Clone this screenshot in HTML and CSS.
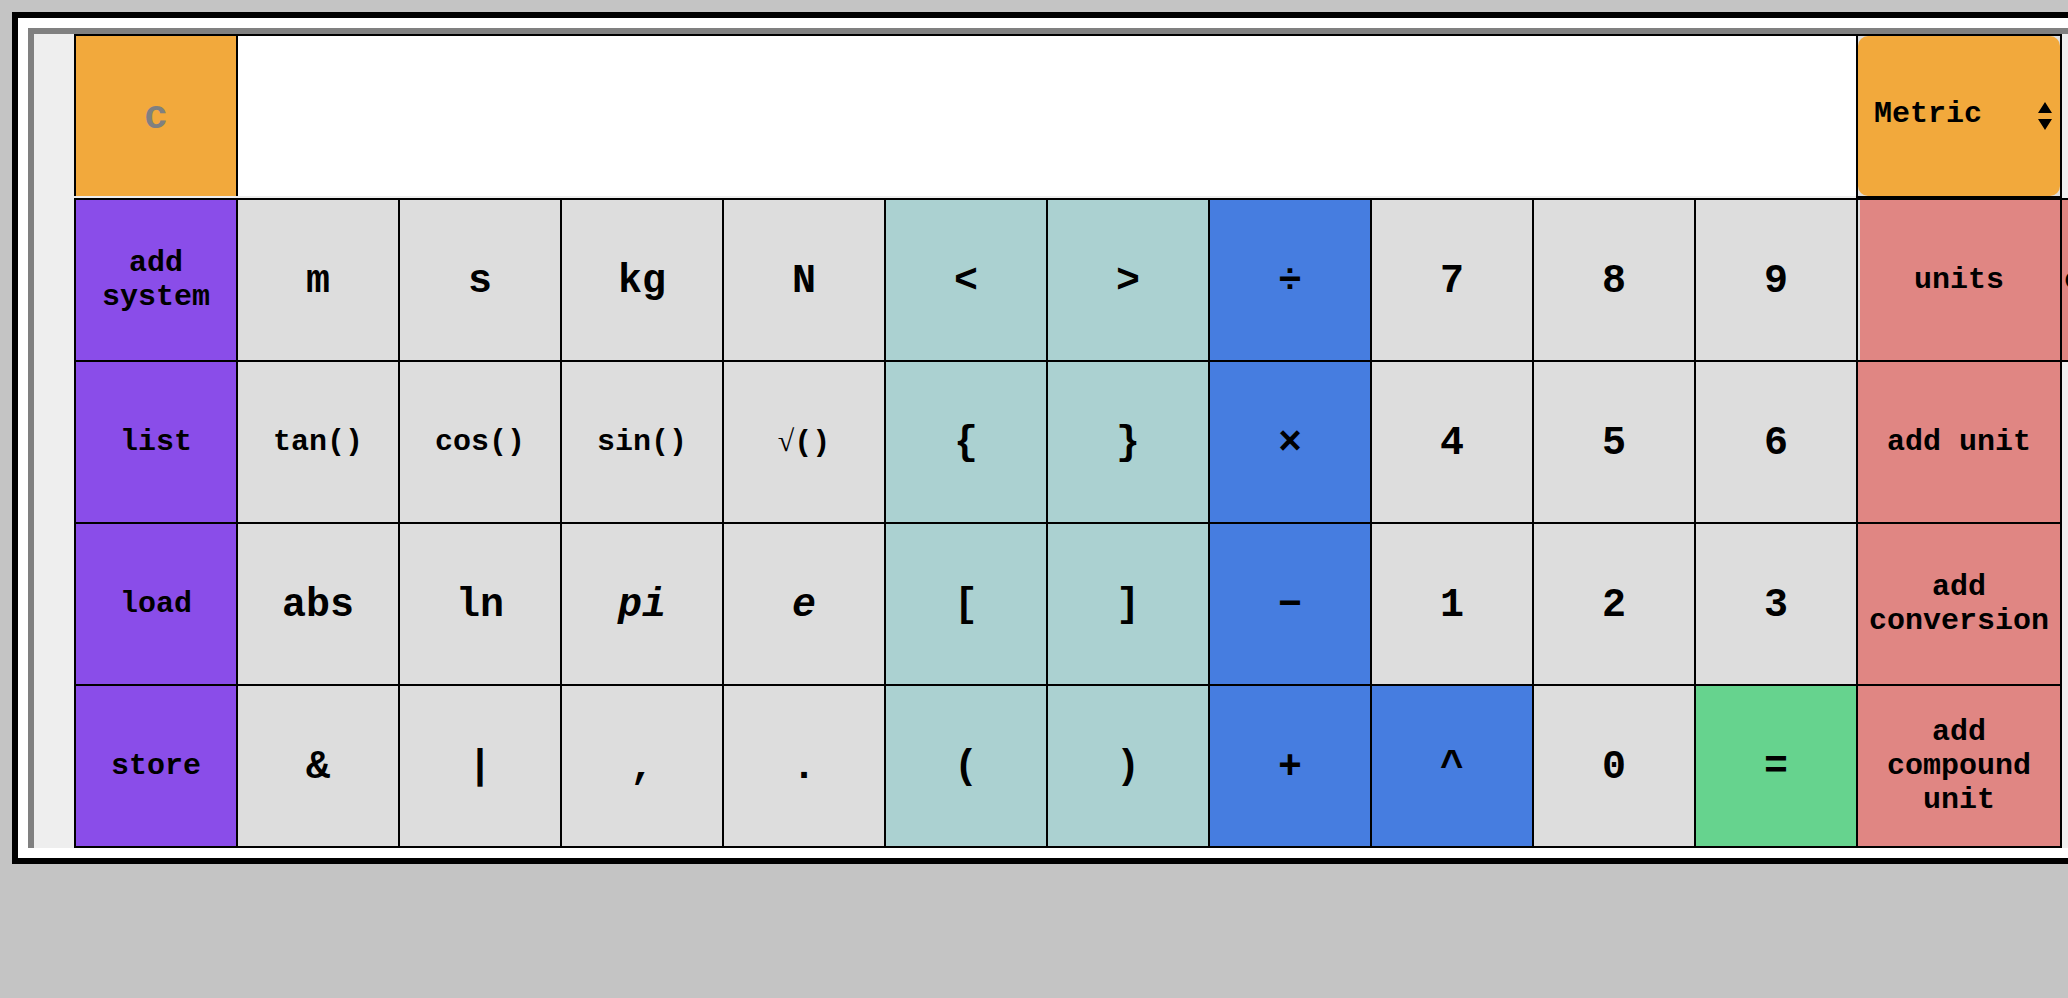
FILE: index.html
```html
<!DOCTYPE html>
<html lang="en">
<head>
<meta charset="utf-8">
<title>Unit calculator</title>
<link rel="stylesheet" href="styles.css">
</head>
<body>
<main class="frame">
  <div class="panel">
    <div class="row top">
      <button class="key orange clear" disabled>c</button>
      <input class="display" type="text" aria-label="Expression">
      <div class="system">
        <select class="system-select" aria-label="Unit system"><option>Metric</option></select>
        <svg class="arrows" viewBox="0 0 14 28" aria-hidden="true"><path d="M7 0L14 11H0ZM7 28L14 17H0Z"/></svg>
      </div>
    </div>
    <div class="row keypad">
      <button class="key small purple">add system</button>
      <button class="key">m</button>
      <button class="key">s</button>
      <button class="key">kg</button>
      <button class="key">N</button>
      <button class="key teal">&lt;</button>
      <button class="key teal">&gt;</button>
      <button class="key blue">÷</button>
      <button class="key">7</button>
      <button class="key">8</button>
      <button class="key">9</button>
      <button class="key small pink edge">units</button>
      <button class="key small pink">conversions</button>

      <button class="key small purple">list</button>
      <button class="key small">tan()</button>
      <button class="key small">cos()</button>
      <button class="key small">sin()</button>
      <button class="key small"><span><span class="root">√</span>()</span></button>
      <button class="key teal">{</button>
      <button class="key teal">}</button>
      <button class="key blue">×</button>
      <button class="key">4</button>
      <button class="key">5</button>
      <button class="key">6</button>
      <button class="key small pink">add unit</button>

      <button class="key small purple">load</button>
      <button class="key">abs</button>
      <button class="key">ln</button>
      <button class="key italic">pi</button>
      <button class="key italic">e</button>
      <button class="key teal">[</button>
      <button class="key teal">]</button>
      <button class="key blue">−</button>
      <button class="key">1</button>
      <button class="key">2</button>
      <button class="key">3</button>
      <button class="key small pink">add conversion</button>

      <button class="key small purple">store</button>
      <button class="key">&amp;</button>
      <button class="key">|</button>
      <button class="key">,</button>
      <button class="key">.</button>
      <button class="key teal">(</button>
      <button class="key teal">)</button>
      <button class="key blue">+</button>
      <button class="key blue">^</button>
      <button class="key">0</button>
      <button class="key green">=</button>
      <button class="key small pink">add compound unit</button>
    </div>
  </div>
</main>
</body>
</html>
```

FILE: styles.css
```css
* {
  box-sizing: border-box;
}

body {
  margin: 0;
  padding: 12px;
  background: #c4c4c4;
  overflow-x: hidden;
  font-family: "Courier New", "Liberation Mono", monospace;
}

/* The calculator is wider than the window and runs off its right side. */
.frame {
  width: calc(100% + 272px);
  padding: 10px;
  border: 6px solid #000;
  background: #fff;
}

.panel {
  padding: 2px 40px 0 42px;
  border: 6px solid #808080;
  border-bottom: 0;
  background: #eee;
}

.row {
  display: grid;
  grid-template-columns: repeat(11, minmax(0, 1fr)) 204px 204px;
  grid-auto-rows: minmax(162px, auto);
}

.keypad {
  margin-top: 2px;
}

/* Neighbouring cells overlap by one border width. */
.key,
.display,
.system {
  margin: -2px 0 0 -2px;
  border: 2px solid #000;
  border-radius: 0;
}

.key {
  padding: 4px 4px 0;
  background: #ddd;
  color: #000;
  font: bold 40px/46px "Courier New", "Liberation Mono", monospace;
}

.small {
  padding: 0;
  font-size: 30px;
  line-height: 34px;
}

.italic {
  font-style: italic;
}

.root {
  font-family: "Liberation Serif", serif;
  font-weight: normal;
}

.orange {
  background: #f2a93c;
}

.purple {
  grid-column: 1;
  background: #8a4de9;
}

.teal {
  background: #abd1d1;
}

.blue {
  background: #467de0;
}

.green {
  background: #66d38e;
}

.pink {
  background: #e08683;
}

.edge {
  box-shadow: inset 2px 0 #ddd;
}

.clear,
.display {
  margin-bottom: 2px;
  border-bottom: 0;
}

.clear {
  color: #808080;
}

.display {
  grid-column: 2 / 12;
  min-width: 0;
  padding: 0 16px;
  background: #fff;
  font: bold 40px/46px "Courier New", "Liberation Mono", monospace;
  outline: 0;
}

.system {
  position: relative;
  display: flex;
  background: #ddd;
}

.system-select {
  appearance: none;
  width: 100%;
  padding: 0 24px 4px 16px;
  border: 0;
  border-radius: 10px;
  background: #f2a93c;
  color: #000;
  font: bold 30px/34px "Courier New", "Liberation Mono", monospace;
}

.arrows {
  position: absolute;
  top: 66px;
  right: 8px;
  width: 14px;
  height: 28px;
  pointer-events: none;
}
```
